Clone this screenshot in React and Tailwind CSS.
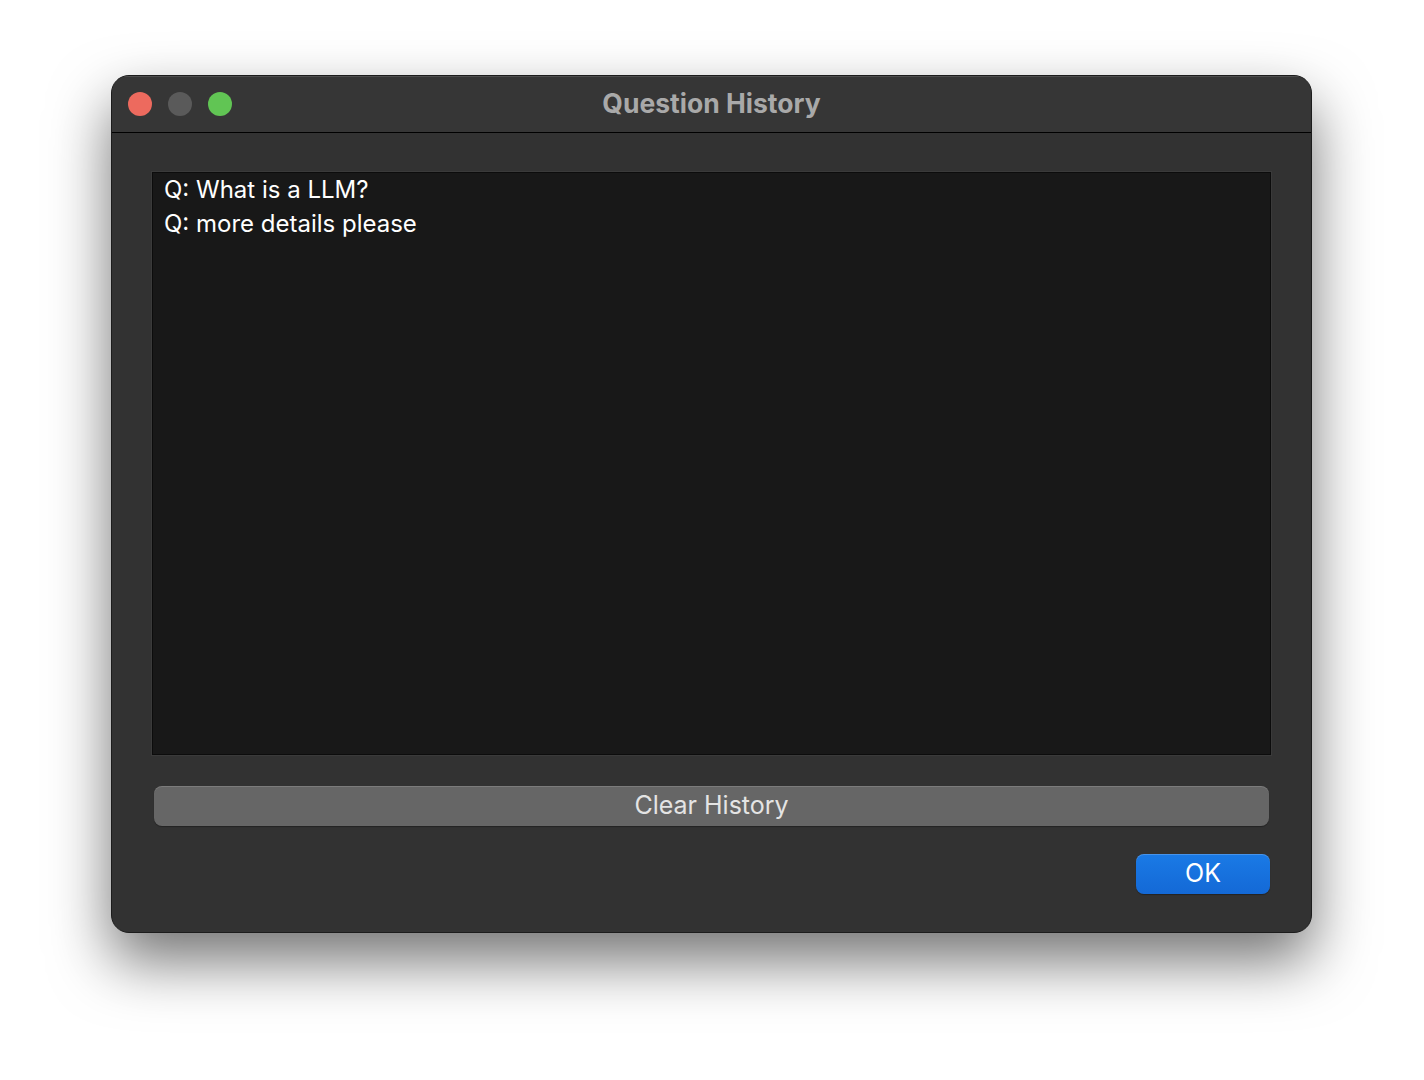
import React from 'react';

// Question History dialog (macOS dark style)
const TrafficLights = () => (
  <div className="flex items-center gap-4">
    <span className="w-6 h-6 rounded-full bg-[#ed6a5e]" />
    <span className="w-6 h-6 rounded-full bg-[#5a5a5a]" />
    <span className="w-6 h-6 rounded-full bg-[#61c554]" />
  </div>
);

export default function App() {
  const history = ['Q: What is a LLM?', 'Q: more details please'];

  return (
    <div
      className="w-[1424px] h-[1080px] bg-white pt-[75px] pl-[111px]"
      style={{ fontFamily: 'Inter, "Noto Sans", sans-serif' }}
    >
      <div className="w-[1201px] h-[858px] rounded-[18px] bg-[#323232] border border-[#1c1c1c] shadow-[0_28px_60px_rgba(0,0,0,0.55)] overflow-hidden flex flex-col">
        {/* title bar */}
        <div className="relative h-[57px] shrink-0 bg-[#363636] border-b border-black flex items-center px-4 shadow-[inset_0_1px_0_rgba(255,255,255,0.12)]">
          <TrafficLights />
          <div className="absolute inset-0 flex items-center justify-center text-[26.5px] font-bold text-[#a9a9a9] pointer-events-none">
            Question History
          </div>
        </div>

        {/* content */}
        <div className="flex-1 flex flex-col px-10 pt-[39px] pb-[38px]">
          <div className="h-[583px] bg-[#181818] border border-[#0c0c0c] px-[11px] shadow-[0_0_0_1px_rgba(255,255,255,0.04)]">
            {history.map((q) => (
              <div key={q} className="text-[24px] leading-[34px] text-white">
                {q}
              </div>
            ))}
          </div>

          <button className="mt-[31px] mx-[2px] h-[40px] rounded-[8px] bg-[#666666] text-[#e4e4e4] text-[25px] shadow-[inset_0_1px_0_rgba(255,255,255,0.15),0_1px_1px_rgba(0,0,0,0.3)]">
            Clear History
          </button>

          <div className="mt-[28px] flex justify-end">
            <button className="w-[134px] h-[40px] mr-[1px] rounded-[8px] bg-gradient-to-b from-[#1a7ae6] to-[#1469d6] text-white text-[25px] shadow-[inset_0_1px_0_rgba(255,255,255,0.2),0_1px_1px_rgba(0,0,0,0.3)]">
              OK
            </button>
          </div>
        </div>
      </div>
    </div>
  );
}
